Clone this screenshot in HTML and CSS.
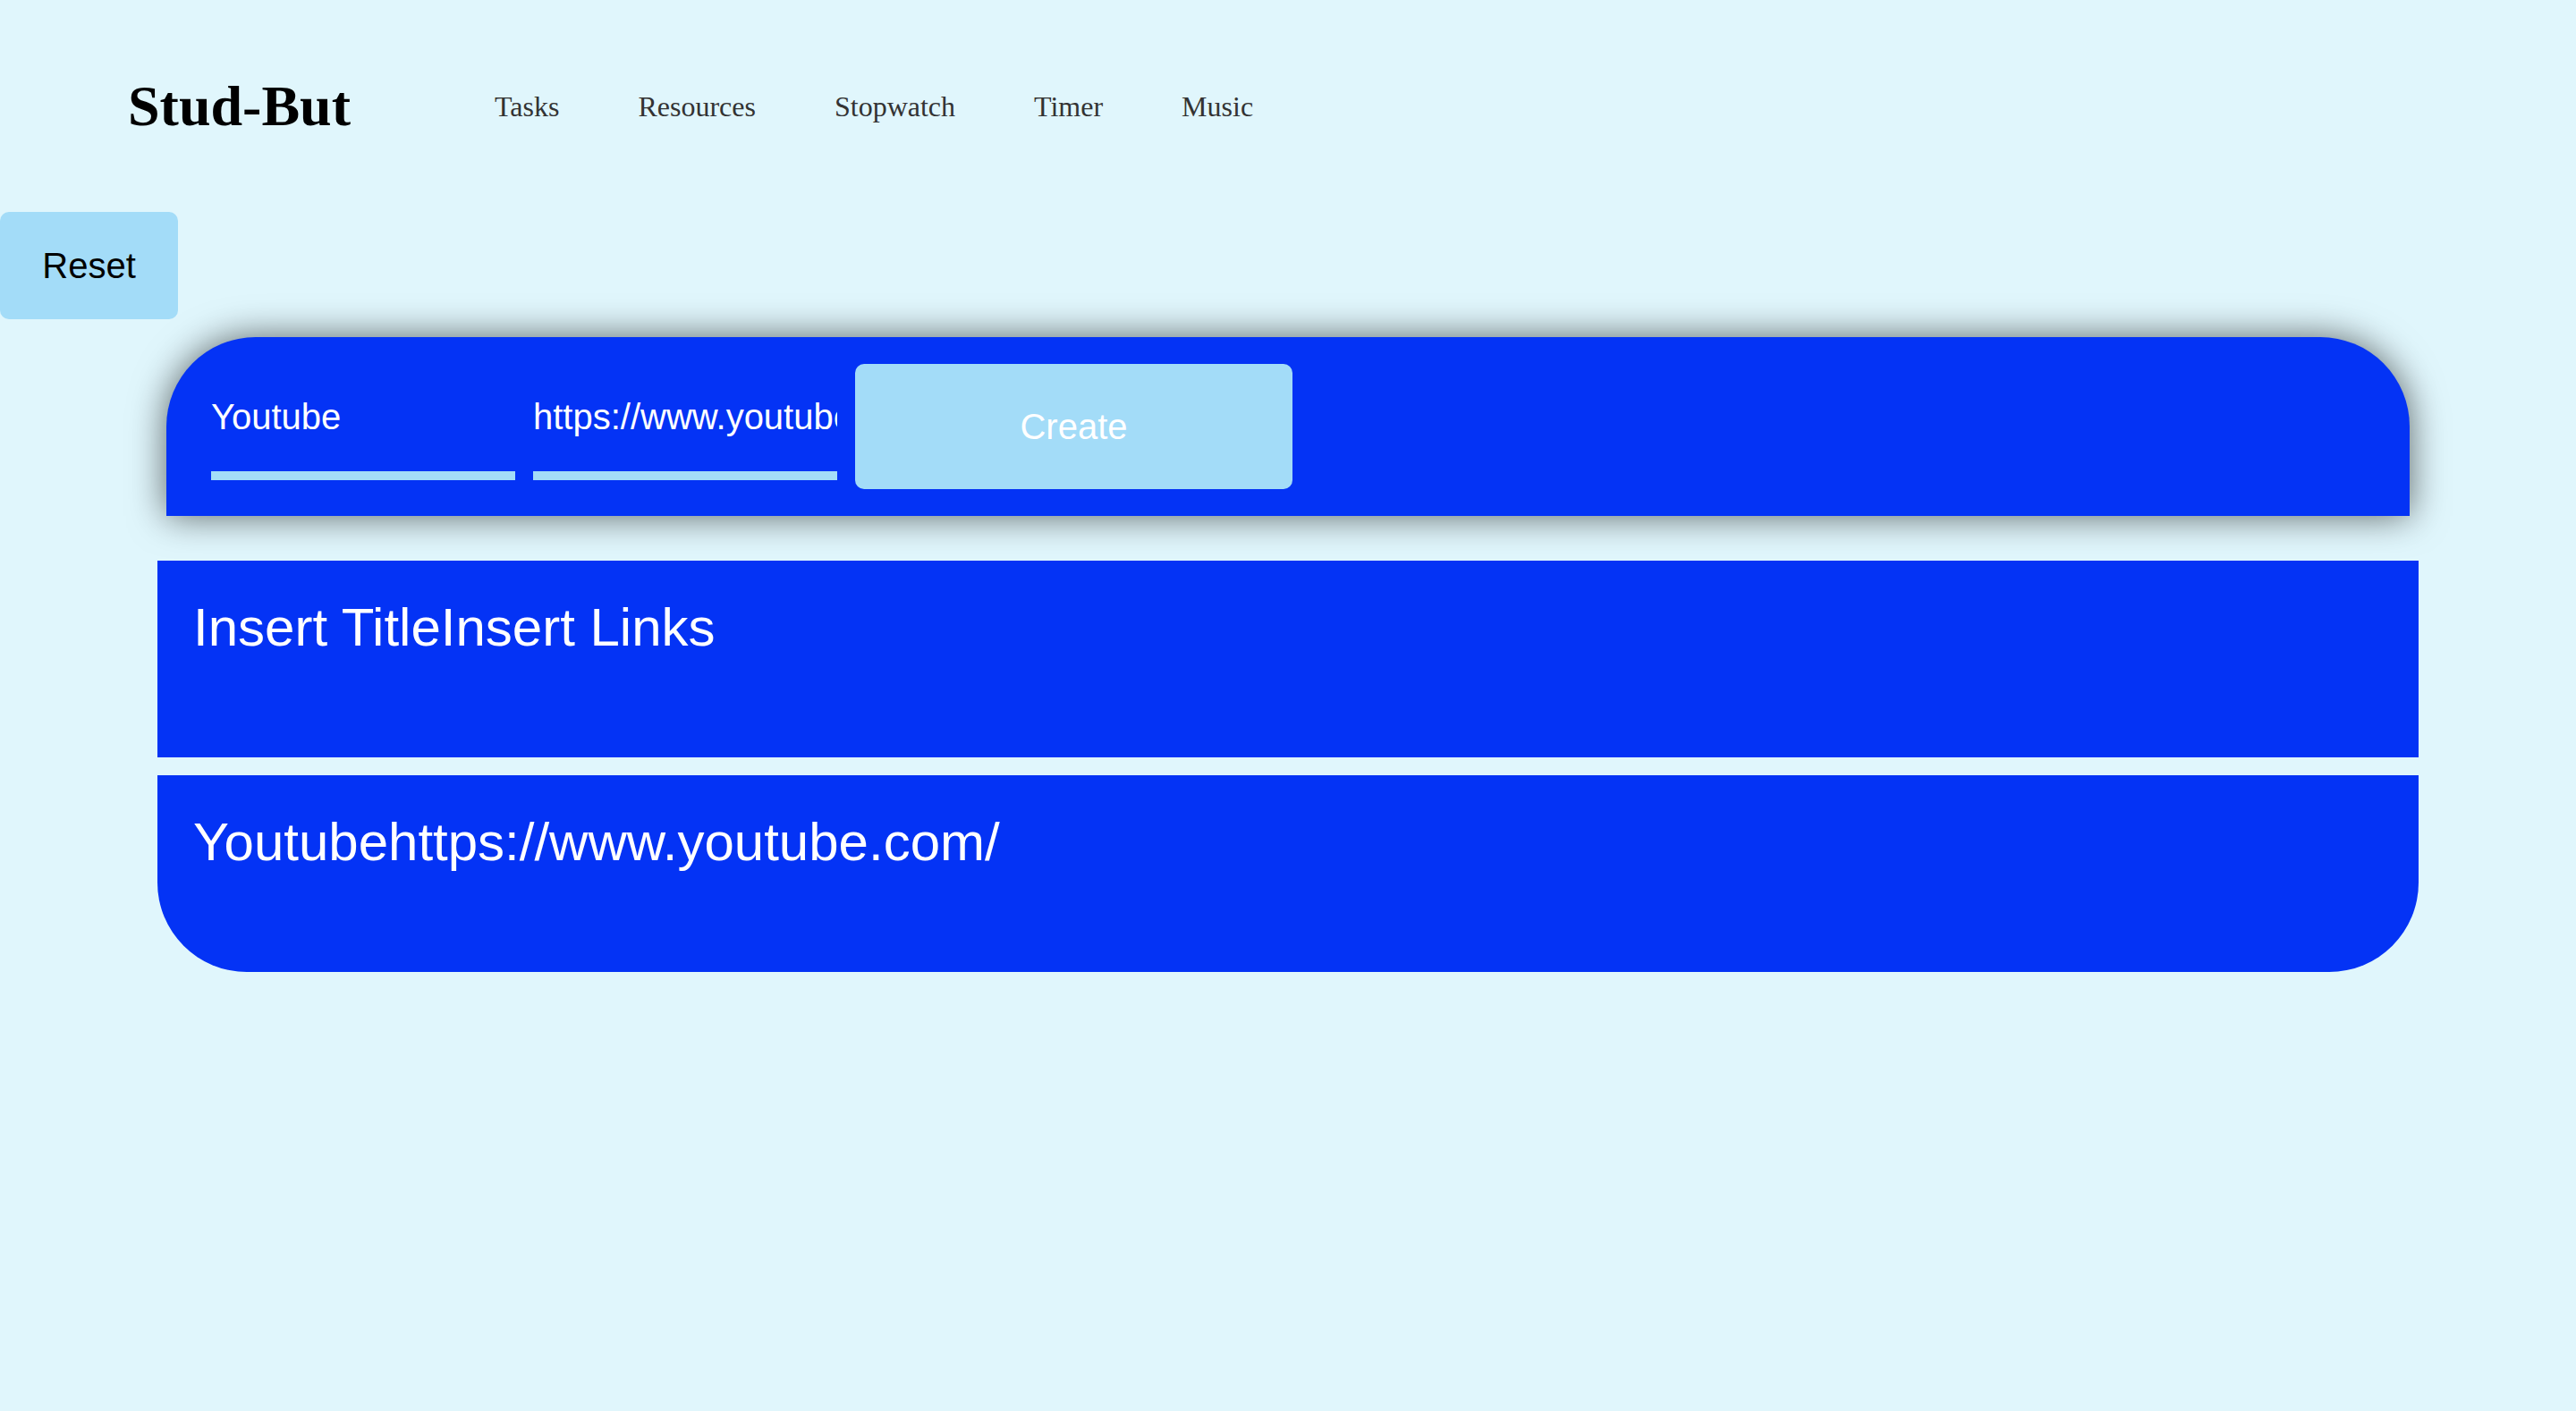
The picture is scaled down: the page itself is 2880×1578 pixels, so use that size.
FILE: index.html
```html
<!DOCTYPE html>
<html lang="en">
<head>
<meta charset="utf-8">
<title>Stud-But</title>
<link rel="stylesheet" href="styles.css">
</head>
<body>
<header class="site-header">
  <h1 class="logo">Stud-But</h1>
  <nav class="nav">
    <a class="nav-link" href="#">Tasks</a>
    <a class="nav-link" href="#">Resources</a>
    <a class="nav-link" href="#">Stopwatch</a>
    <a class="nav-link" href="#">Timer</a>
    <a class="nav-link" href="#">Music</a>
  </nav>
</header>
<button class="reset-btn" type="button">Reset</button>
<form class="link-form">
  <input class="link-input" type="text" value="Youtube">
  <input class="link-input" type="text" value="https://www.youtube.com/">
  <button class="create-btn" type="button">Create</button>
</form>
<div class="link-list">
  <div class="link-row">Insert TitleInsert Links</div>
  <div class="link-row link-row-last">Youtubehttps://www.youtube.com/</div>
</div>
</body>
</html>
```
FILE: styles.css
```css
html, body {
  margin: 0;
  padding: 0;
}
body {
  background: #e0f6fc;
  font-family: "Liberation Sans", Arial, sans-serif;
  min-height: 100vh;
}
.site-header {
  display: flex;
  align-items: center;
  height: 72px;
  padding: 83px 0 0 143px;
}
.logo {
  margin: 0;
  font-family: "Liberation Serif", "Times New Roman", serif;
  font-weight: bold;
  font-size: 64px;
  line-height: 72px;
  color: #000;
}
.nav {
  display: flex;
  gap: 88px;
  margin-left: 161px;
}
.nav-link {
  font-family: "Liberation Serif", "Times New Roman", serif;
  font-size: 32px;
  line-height: 37px;
  color: #333;
  text-decoration: none;
}
.reset-btn {
  display: block;
  margin-top: 82px;
  width: 199px;
  height: 120px;
  border: none;
  border-radius: 10px;
  background: #a3dcf8;
  color: #000;
  font-family: "Liberation Sans", Arial, sans-serif;
  font-size: 40px;
  padding: 0;
}
.link-form {
  display: flex;
  align-items: center;
  gap: 20px;
  margin: 20px 186px 0;
  height: 200px;
  box-sizing: border-box;
  padding: 30px 0 30px 50px;
  background: #0433f5;
  border-radius: 100px 100px 0 0;
  box-shadow: 0 0 40px rgba(0, 0, 0, 0.6);
}
.link-input {
  width: 340px;
  height: 120px;
  box-sizing: border-box;
  padding: 0 0 12px 0;
  margin: 0;
  border: none;
  border-bottom: 10px solid #a3dcf8;
  background: transparent;
  color: #fff;
  font-family: "Liberation Sans", Arial, sans-serif;
  font-size: 40px;
  outline: none;
}
.create-btn {
  width: 489px;
  height: 140px;
  border: none;
  border-radius: 10px;
  background: #a3dcf8;
  color: #fff;
  font-family: "Liberation Sans", Arial, sans-serif;
  font-size: 40px;
  padding: 0;
}
.link-list {
  display: flex;
  flex-direction: column;
  gap: 20px;
  margin: 50px 176px 0;
}
.link-row {
  height: 220px;
  box-sizing: border-box;
  padding: 40px 40px;
  background: #0433f5;
  color: #fff;
  font-size: 60px;
  line-height: 69px;
}
.link-row-last {
  border-radius: 0 0 100px 100px;
}
```
